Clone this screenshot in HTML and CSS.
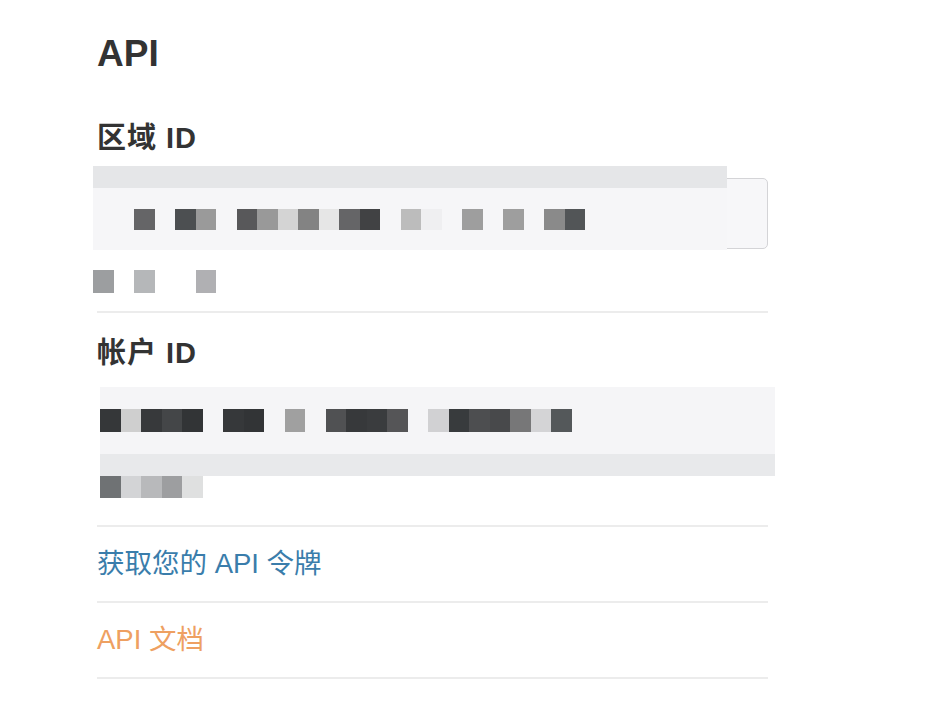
FILE: index.html
```html
<!DOCTYPE html>
<html lang="zh-CN">
<head>
<meta charset="utf-8">
<title>API</title>
<link rel="stylesheet" href="styles.css">
</head>
<body>
<main class="page">
  <h1 class="title">API</h1>

  <section class="section">
    <h2 class="label label-region">区域 ID</h2>
    <div class="field">
      <div class="input"></div>
      <div class="helper"></div>
      <div class="mosaic mosaic-region" aria-hidden="true">
        <div class="mrow h22 band"></div>
        <div class="mrow h21 soft"></div>
        <div class="mrow h21 soft">
          <span class="px"></span><span class="px"></span><span class="px c656567"></span><span class="px"></span><span class="px c4c4f51"></span><span class="px c9a9a9a"></span><span class="px"></span><span class="px c58585a"></span><span class="px c999999"></span><span class="px cd4d4d4"></span><span class="px c838383"></span><span class="px ce6e6e6"></span><span class="px c656567"></span><span class="px c414244"></span><span class="px"></span><span class="px cbcbcbc"></span><span class="px cefeff1"></span><span class="px"></span><span class="px c9e9e9e"></span><span class="px"></span><span class="px c9e9e9e"></span><span class="px"></span><span class="px c8a8a8a"></span><span class="px c525557"></span>
        </div>
        <div class="mrow h20 soft"></div>
        <div class="mrow h20"></div>
        <div class="mrow h23">
          <span class="px c9c9ea0"></span><span class="px"></span><span class="px cb5b7b9"></span><span class="px"></span><span class="px"></span><span class="px cb0b0b3"></span>
        </div>
      </div>
    </div>
  </section>

  <section class="section">
    <h2 class="label label-account">帐户 ID</h2>
    <div class="mosaic mosaic-account" aria-hidden="true">
      <div class="mrow h22 soft2"></div>
      <div class="mrow h23 soft2">
        <span class="px c353739"></span><span class="px ccfcfcf"></span><span class="px c37393b"></span><span class="px c444648"></span><span class="px c323436"></span><span class="px"></span><span class="px c36383a"></span><span class="px c323436"></span><span class="px"></span><span class="px ca0a0a0"></span><span class="px"></span><span class="px c505153"></span><span class="px c37393b"></span><span class="px c3a3c3e"></span><span class="px c555557"></span><span class="px"></span><span class="px cd1d1d3"></span><span class="px c383b3d"></span><span class="px c4d4e50"></span><span class="px c48494b"></span><span class="px c777778"></span><span class="px cd4d4d6"></span><span class="px c54585a"></span>
      </div>
      <div class="mrow h22 soft2"></div>
      <div class="mrow h22 band2"></div>
      <div class="mrow h22">
        <span class="px c6f7274"></span><span class="px cd3d4d6"></span><span class="px cb8b9bb"></span><span class="px c9d9ea0"></span><span class="px cdfe0e0"></span>
      </div>
    </div>
  </section>

  <nav class="links">
    <a class="link link-token" href="#">获取您的 API 令牌</a>
    <a class="link link-docs" href="#">API 文档</a>
  </nav>
</main>
</body>
</html>
```

FILE: styles.css
```css
html, body {
  margin: 0;
  padding: 0;
  background: #ffffff;
}

body {
  font-family: "Liberation Sans", "Noto Sans CJK SC", sans-serif;
  color: #333333;
}

.page {
  width: 671px;
  margin-left: 97px;
  padding-top: 35px;
}

.title {
  margin: 0;
  font-size: 37px;
  line-height: 37px;
  font-weight: 700;
  color: #333333;
}

.section {
  border-bottom: 2px solid #ececec;
}

.label {
  margin: 0;
  font-size: 29px;
  line-height: 29px;
  letter-spacing: 1px;
  font-weight: 700;
  color: #333333;
}

.label-region {
  margin-top: 52px;
}

.label-account {
  margin-top: 26px;
}

.field {
  position: relative;
  margin-top: 25px;
  padding-bottom: 18px;
}

.input {
  height: 69px;
  border: 1px solid #d4d4d7;
  border-radius: 5px;
  background: #f7f7f9;
}

.helper {
  height: 23px;
  margin-top: 21px;
}

.mosaic {
  display: flex;
  flex-direction: column;
}

.mosaic-region {
  position: absolute;
  top: -12px;
  left: -4px;
  width: 634px;
}

.mosaic-account {
  width: 675px;
  margin: 19px -7px 27px 3px;
}

.mrow {
  display: flex;
}

.h20 { height: 20px; }
.h21 { height: 21px; }
.h22 { height: 22px; }
.h23 { height: 23px; }

.band { background: #e5e6e8; }
.soft { background: #f6f6f8; }
.band2 { background: #e8e9eb; }
.soft2 { background: #f5f5f7; }

.px {
  flex: 0 0 20.5px;
  height: 100%;
}

.c656567 { background: #656567; }
.c4c4f51 { background: #4c4f51; }
.c9a9a9a { background: #9a9a9a; }
.c58585a { background: #58585a; }
.c999999 { background: #999999; }
.cd4d4d4 { background: #d4d4d4; }
.c838383 { background: #838383; }
.ce6e6e6 { background: #e6e6e6; }
.c414244 { background: #414244; }
.cbcbcbc { background: #bcbcbc; }
.cefeff1 { background: #efeff1; }
.c9e9e9e { background: #9e9e9e; }
.c8a8a8a { background: #8a8a8a; }
.c525557 { background: #525557; }
.c9c9ea0 { background: #9c9ea0; }
.cb5b7b9 { background: #b5b7b9; }
.cb0b0b3 { background: #b0b0b3; }

.c353739 { background: #353739; }
.ccfcfcf { background: #cfcfcf; }
.c37393b { background: #37393b; }
.c444648 { background: #444648; }
.c323436 { background: #323436; }
.c36383a { background: #36383a; }
.ca0a0a0 { background: #a0a0a0; }
.c505153 { background: #505153; }
.c3a3c3e { background: #3a3c3e; }
.c555557 { background: #555557; }
.cd1d1d3 { background: #d1d1d3; }
.c383b3d { background: #383b3d; }
.c4d4e50 { background: #4d4e50; }
.c48494b { background: #48494b; }
.c777778 { background: #777778; }
.cd4d4d6 { background: #d4d4d6; }
.c54585a { background: #54585a; }
.c6f7274 { background: #6f7274; }
.cd3d4d6 { background: #d3d4d6; }
.cb8b9bb { background: #b8b9bb; }
.c9d9ea0 { background: #9d9ea0; }
.cdfe0e0 { background: #dfe0e0; }

.links {
  display: flex;
  flex-direction: column;
}

.link {
  display: flex;
  align-items: center;
  height: 74px;
  border-bottom: 2px solid #ececec;
  font-size: 27.5px;
  line-height: 28px;
  text-decoration: none;
}

.link-token {
  color: #3a7dab;
}

.link-docs {
  color: #eea061;
}
```
